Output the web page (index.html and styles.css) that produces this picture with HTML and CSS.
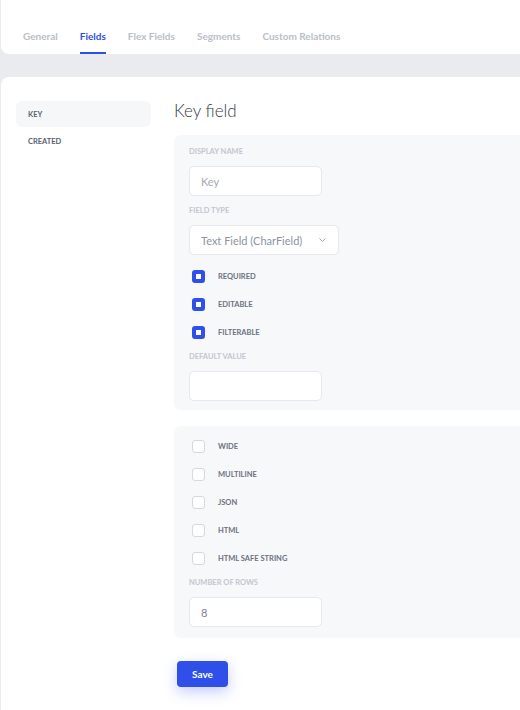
FILE: index.html
```html
<!DOCTYPE html>
<html>
<head>
<meta charset="utf-8">
<link rel="stylesheet" href="styles.css">
</head>
<body>
<div class="page">
  <div class="tabs-card">
    <div class="tab">General</div>
    <div class="tab active">Fields</div>
    <div class="tab">Flex Fields</div>
    <div class="tab">Segments</div>
    <div class="tab">Custom Relations</div>
  </div>
  <div class="main-card">
    <div class="sidebar">
      <div class="side-item selected">KEY</div>
      <div class="side-item">CREATED</div>
    </div>
    <div class="content">
      <h1 class="title">Key field</h1>
      <div class="panel panel-first">
        <div class="label">DISPLAY NAME</div>
        <div class="input placeholder">Key</div>
        <div class="label label-gap">FIELD TYPE</div>
        <div class="input select">
          <span>Text Field (CharField)</span>
          <svg class="chev" width="9" height="6" viewBox="0 0 9 6"><path d="M1.5 1.5 L4.5 4.4 L7.5 1.5" fill="none" stroke="#9ba1ae" stroke-width="1"/></svg>
        </div>
        <div class="checks checks-first">
          <div class="check"><span class="box on"></span><span class="clabel">REQUIRED</span></div>
          <div class="check"><span class="box on"></span><span class="clabel">EDITABLE</span></div>
          <div class="check"><span class="box on"></span><span class="clabel">FILTERABLE</span></div>
        </div>
        <div class="label label-after-checks">DEFAULT VALUE</div>
        <div class="input"></div>
      </div>
      <div class="panel panel-second">
        <div class="checks">
          <div class="check"><span class="box"></span><span class="clabel">WIDE</span></div>
          <div class="check"><span class="box"></span><span class="clabel">MULTILINE</span></div>
          <div class="check"><span class="box"></span><span class="clabel">JSON</span></div>
          <div class="check"><span class="box"></span><span class="clabel">HTML</span></div>
          <div class="check"><span class="box"></span><span class="clabel">HTML SAFE STRING</span></div>
        </div>
        <div class="label label-rows">NUMBER OF ROWS</div>
        <div class="input value">8</div>
      </div>
      <button class="save">Save</button>
    </div>
  </div>
</div>
</body>
</html>
```
FILE: styles.css
```css
html, body {
  margin: 0;
  padding: 0;
  background: #e9ebef;
  font-family: Lato, "Open Sans", sans-serif;
  overflow: hidden;
  height: 710px;
}
.page {
  padding-left: 1px;
  height: 710px;
}
.tabs-card {
  background: #fff;
  height: 54px;
  border-radius: 0 0 8px 8px;
  margin-right: -20px;
  display: flex;
  align-items: flex-end;
  padding-left: 22px;
  box-sizing: border-box;
}
.tab {
  font-size: 10px;
  font-weight: 700;
  color: #b9bec9;
  line-height: 14px;
  padding-bottom: 9px;
  margin-right: 22px;
  border-bottom: 2px solid transparent;
}
.tab.active {
  color: #2e4fe9;
  border-bottom-color: #2e4fe9;
}
.main-card {
  background: #fff;
  margin-top: 23px;
  margin-right: -20px;
  border-radius: 8px 8px 0 0;
  height: 640px;
  display: flex;
  padding: 24px 0 0 15px;
  box-sizing: border-box;
}
.sidebar {
  width: 135px;
  margin-right: 23px;
  flex-shrink: 0;
}
.side-item {
  height: 26px;
  margin-bottom: 1px;
  border-radius: 6px;
  padding-left: 12px;
  display: flex;
  align-items: center;
  font-size: 7.5px;
  font-weight: 700;
  color: #5a6070;
}
.side-item.selected {
  background: #f6f7f9;
}
.content {
  flex: 1;
}
.title {
  margin: 0 0 14px 0;
  font-size: 17px;
  line-height: 20px;
  font-weight: 300;
  color: #343a46;
}
.panel {
  background: #f7f8fa;
  border-radius: 6px 0 0 6px;
  padding: 12px 15px 9px 15px;
}
.panel-second {
  margin-top: 16px;
  padding-top: 6px;
  padding-bottom: 11px;
}
.label {
  font-size: 7.5px;
  line-height: 10px;
  font-weight: 700;
  color: #c2c6cf;
  margin-bottom: 9px;
}
.label-gap {
  margin-top: 10px;
  margin-bottom: 9px;
}
.label-after-checks {
  margin-top: 6px;
  margin-bottom: 9px;
}
.label-rows {
  margin-top: 6px;
  margin-bottom: 9px;
}
.input {
  width: 133px;
  height: 30px;
  box-sizing: border-box;
  background: #fff;
  border: 1px solid #e6e8ed;
  border-radius: 5px;
  padding-left: 11px;
  display: flex;
  align-items: center;
  font-size: 11px;
  color: #5d6372;
}
.input.placeholder {
  color: #a3a8b4;
}
.input.value {
  color: #7a808e;
}
.select {
  width: 150px;
  justify-content: space-between;
  padding-right: 11px;
  color: #8d93a1;
}
.checks-first {
  margin-top: 7px;
}
.check {
  height: 28px;
  display: flex;
  align-items: center;
  padding-left: 3px;
}
.box {
  width: 13px;
  height: 13px;
  box-sizing: border-box;
  border: 1px solid #d6d9df;
  border-radius: 3px;
  background: #fff;
  margin-right: 13px;
  flex-shrink: 0;
}
.box.on {
  border: 4px solid #2e4fe9;
  border-radius: 3px;
}
.clabel {
  font-size: 7.5px;
  font-weight: 700;
  color: #6b7180;
}
.save {
  margin: 23px 0 0 3px;
  width: 51px;
  height: 26px;
  border: none;
  border-radius: 4px;
  background: #2e4fe9;
  color: #fff;
  font-family: Lato, sans-serif;
  font-size: 10px;
  font-weight: 700;
  box-shadow: 0 5px 14px rgba(46, 79, 233, 0.28);
  padding: 0;
}
```
